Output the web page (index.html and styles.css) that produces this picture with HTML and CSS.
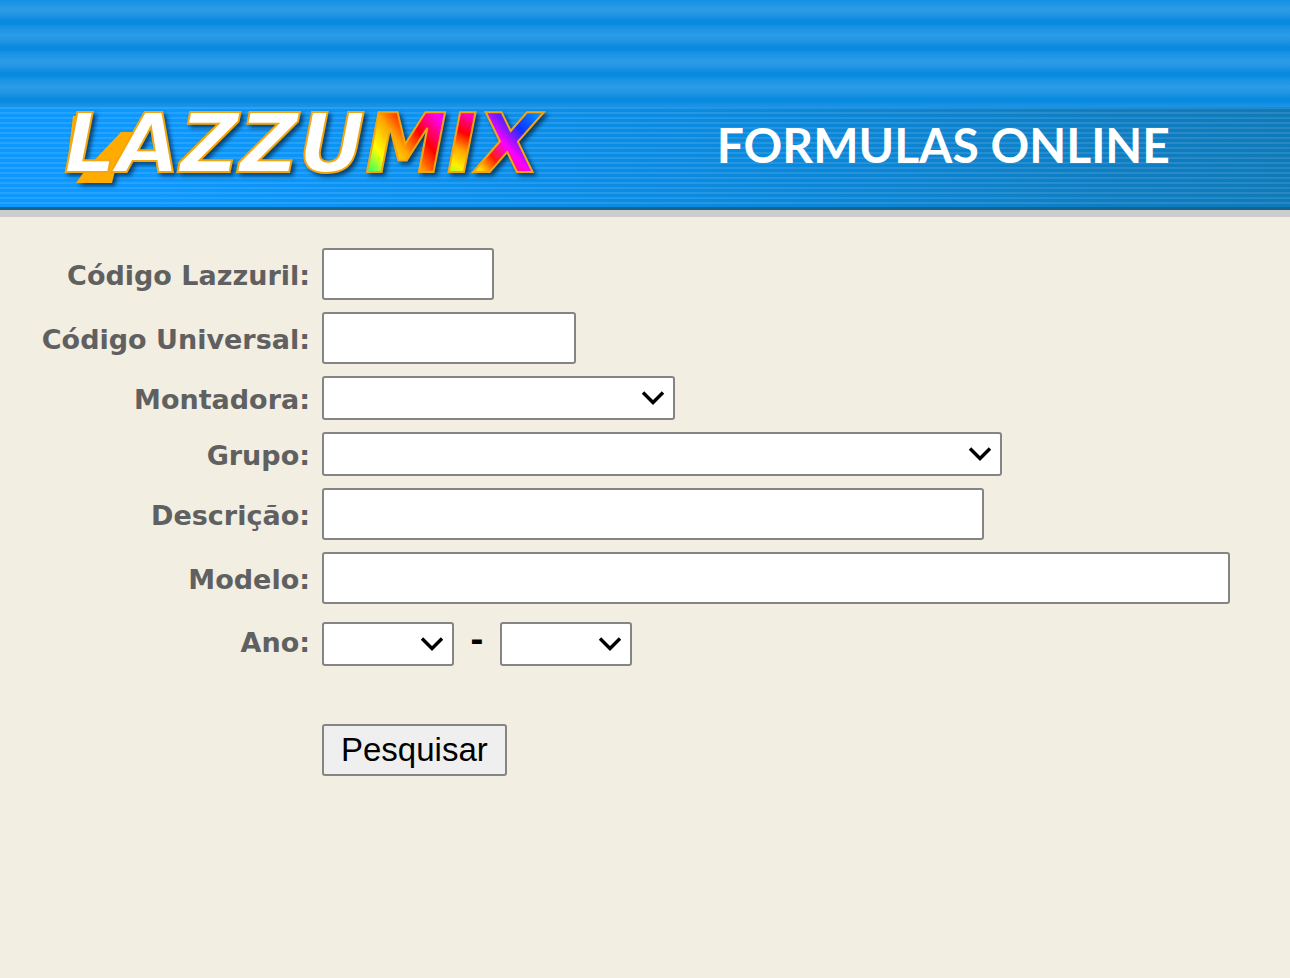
FILE: index.html
```html
<!DOCTYPE html>
<html lang="pt-BR">
<head>
<meta charset="utf-8">
<meta name="viewport" content="width=device-width, initial-scale=1">
<title>Lazzumix - Formulas Online</title>
<link rel="stylesheet" href="styles.css">
</head>
<body>
<header class="header">
  <div class="waves"></div>
  <div class="banner">
    <svg class="logo" width="500" height="88" viewBox="0 0 500 88" role="img" aria-label="Lazzumix">
      <defs>
        <linearGradient id="m" gradientUnits="userSpaceOnUse" x1="312" y1="76" x2="400" y2="10">
          <stop offset="0" stop-color="#00ff80"/><stop offset=".22" stop-color="#ffff00"/>
          <stop offset=".42" stop-color="#ffa500"/><stop offset=".62" stop-color="#ff0000"/>
          <stop offset=".85" stop-color="#ff00ff"/><stop offset="1" stop-color="#5a20ff"/>
        </linearGradient>
        <linearGradient id="i" gradientUnits="userSpaceOnUse" x1="392" y1="72" x2="424" y2="8">
          <stop offset="0" stop-color="#80ff30"/><stop offset=".2" stop-color="#fff000"/>
          <stop offset=".42" stop-color="#ffa500"/><stop offset=".65" stop-color="#ff0000"/>
          <stop offset="1" stop-color="#ff00ff"/>
        </linearGradient>
        <linearGradient id="x" gradientUnits="userSpaceOnUse" x1="424" y1="66" x2="486" y2="12">
          <stop offset="0" stop-color="#ffd800"/><stop offset=".2" stop-color="#ff2000"/>
          <stop offset=".42" stop-color="#ff00ff"/><stop offset=".68" stop-color="#1030ff"/>
          <stop offset="1" stop-color="#0098ff"/>
        </linearGradient>
      </defs>
      <g class="logo-shade">
        <path class="logo-block" d="M13 9H24L9 42ZM61 25H80L58 52 52 76H16L26 62Z"/>
        <text class="logo-text" x="4" y="65">LAZZU<tspan fill="url(#m)">M</tspan><tspan fill="url(#i)">I</tspan><tspan fill="url(#x)">X</tspan></text>
      </g>
    </svg>
    <h1 class="title">FORMULAS ONLINE</h1>
  </div>
</header>
<main>
  <form class="form" action="#">
    <label for="codigo">Código Lazzuril:</label>
    <div class="field"><input id="codigo" class="box w-code" type="text"></div>
    <label for="universal">Código Universal:</label>
    <div class="field"><input id="universal" class="box w-universal" type="text"></div>
    <label for="montadora">Montadora:</label>
    <div class="field"><select id="montadora" class="box w-maker"><option></option></select></div>
    <label for="grupo">Grupo:</label>
    <div class="field"><select id="grupo" class="box w-group"><option></option></select></div>
    <label for="descricao">Descrição:</label>
    <div class="field"><input id="descricao" class="box w-description" type="text"></div>
    <label for="modelo">Modelo:</label>
    <div class="field"><input id="modelo" class="box w-model" type="text"></div>
    <label for="ano">Ano:</label>
    <div class="field years">
      <select id="ano" class="box w-year"><option></option></select>
      <span class="dash">-</span>
      <select class="box w-year" aria-label="Ano final"><option></option></select>
    </div>
    <div class="actions"><button class="submit" type="submit">Pesquisar</button></div>
  </form>
</main>
</body>
</html>
```
FILE: styles.css
```css
* { box-sizing: border-box; }

body {
  margin: 0;
  min-height: 100vh;
  background: #f2eee1;
  color: #000;
  font-family: "DejaVu Sans", Verdana, sans-serif;
}

.header { border-bottom: 7px solid #ccc; }

.waves {
  height: 107px;
  background: repeating-linear-gradient(to bottom,
    #1590e5 0, #2c9ce6 9px, #2496e4 14px, #088adf 21px, #088adf 24px, #1590e5 26px);
}

.banner {
  display: grid;
  grid-template-columns: 5fr 4fr;
  align-items: start;
  height: 103px;
  border-bottom: 3px solid #14658f;
  background:
    repeating-linear-gradient(to bottom,
      rgba(255, 255, 255, .11) 0, rgba(255, 255, 255, .11) 2px,
      transparent 2px, transparent 5px),
    linear-gradient(to right, #0c98ff 0, #0c98ff 12%, #0a88dc 60%, #0e7ec4 85%, #0e7aba 100%);
}

.logo {
  margin-left: 60px;
  max-width: 100%;
  overflow: visible;
}

.logo-shade { filter: drop-shadow(3px 3px 2px rgba(0, 30, 60, .7)); }

.logo-block { fill: #ffab00; }

.logo-text {
  fill: #fff;
  stroke: #f5a60f;
  stroke-width: 2px;
  font: italic bold 82px "DejaVu Sans", sans-serif;
}

.title {
  margin: 10px 0 0;
  color: #fff;
  font: bold 48px/56px Lato, sans-serif;
  white-space: nowrap;
}

.form {
  display: grid;
  grid-template-columns: 310px 1fr;
  align-items: center;
  gap: 12px;
  padding: 31px 12px 48px 0;
}

.form label {
  padding-top: 3px;
  color: #606060;
  font-size: 27px;
  font-weight: bold;
  line-height: 32px;
  text-align: right;
}

.field { display: flex; align-items: center; }

.box {
  height: 52px;
  max-width: 100%;
  margin: 0;
  padding: 4px 8px;
  border: 2px solid #858585;
  border-radius: 3px;
  background: #fff;
  font: 32px "Liberation Sans", Arial, sans-serif;
}

select.box {
  height: 44px;
  padding-right: 40px;
  appearance: none;
  background: #fff url("data:image/svg+xml,%3Csvg xmlns='http://www.w3.org/2000/svg' width='24' height='16'%3E%3Cpath d='M2 2.5L12 12.5L22 2.5' fill='none' stroke='%23000' stroke-width='3.4'/%3E%3C/svg%3E") no-repeat right 8px center;
}

.w-code { width: 172px; }
.w-universal { width: 254px; }
.w-maker { width: 353px; }
.w-group { width: 680px; }
.w-description { width: 662px; }
.w-model { width: 908px; }
.w-year { width: 132px; }

.years { padding-top: 6px; }

.dash {
  width: 46px;
  padding-bottom: 8px;
  font-size: 32px;
  font-weight: bold;
  line-height: 32px;
  text-align: center;
}

.actions { grid-column: 2; padding-top: 46px; }

.submit {
  height: 52px;
  padding: 0 17px;
  border: 2px solid #858585;
  border-radius: 3px;
  background: #efefef;
  color: #000;
  font: 33px "Liberation Sans", Arial, sans-serif;
}
```
